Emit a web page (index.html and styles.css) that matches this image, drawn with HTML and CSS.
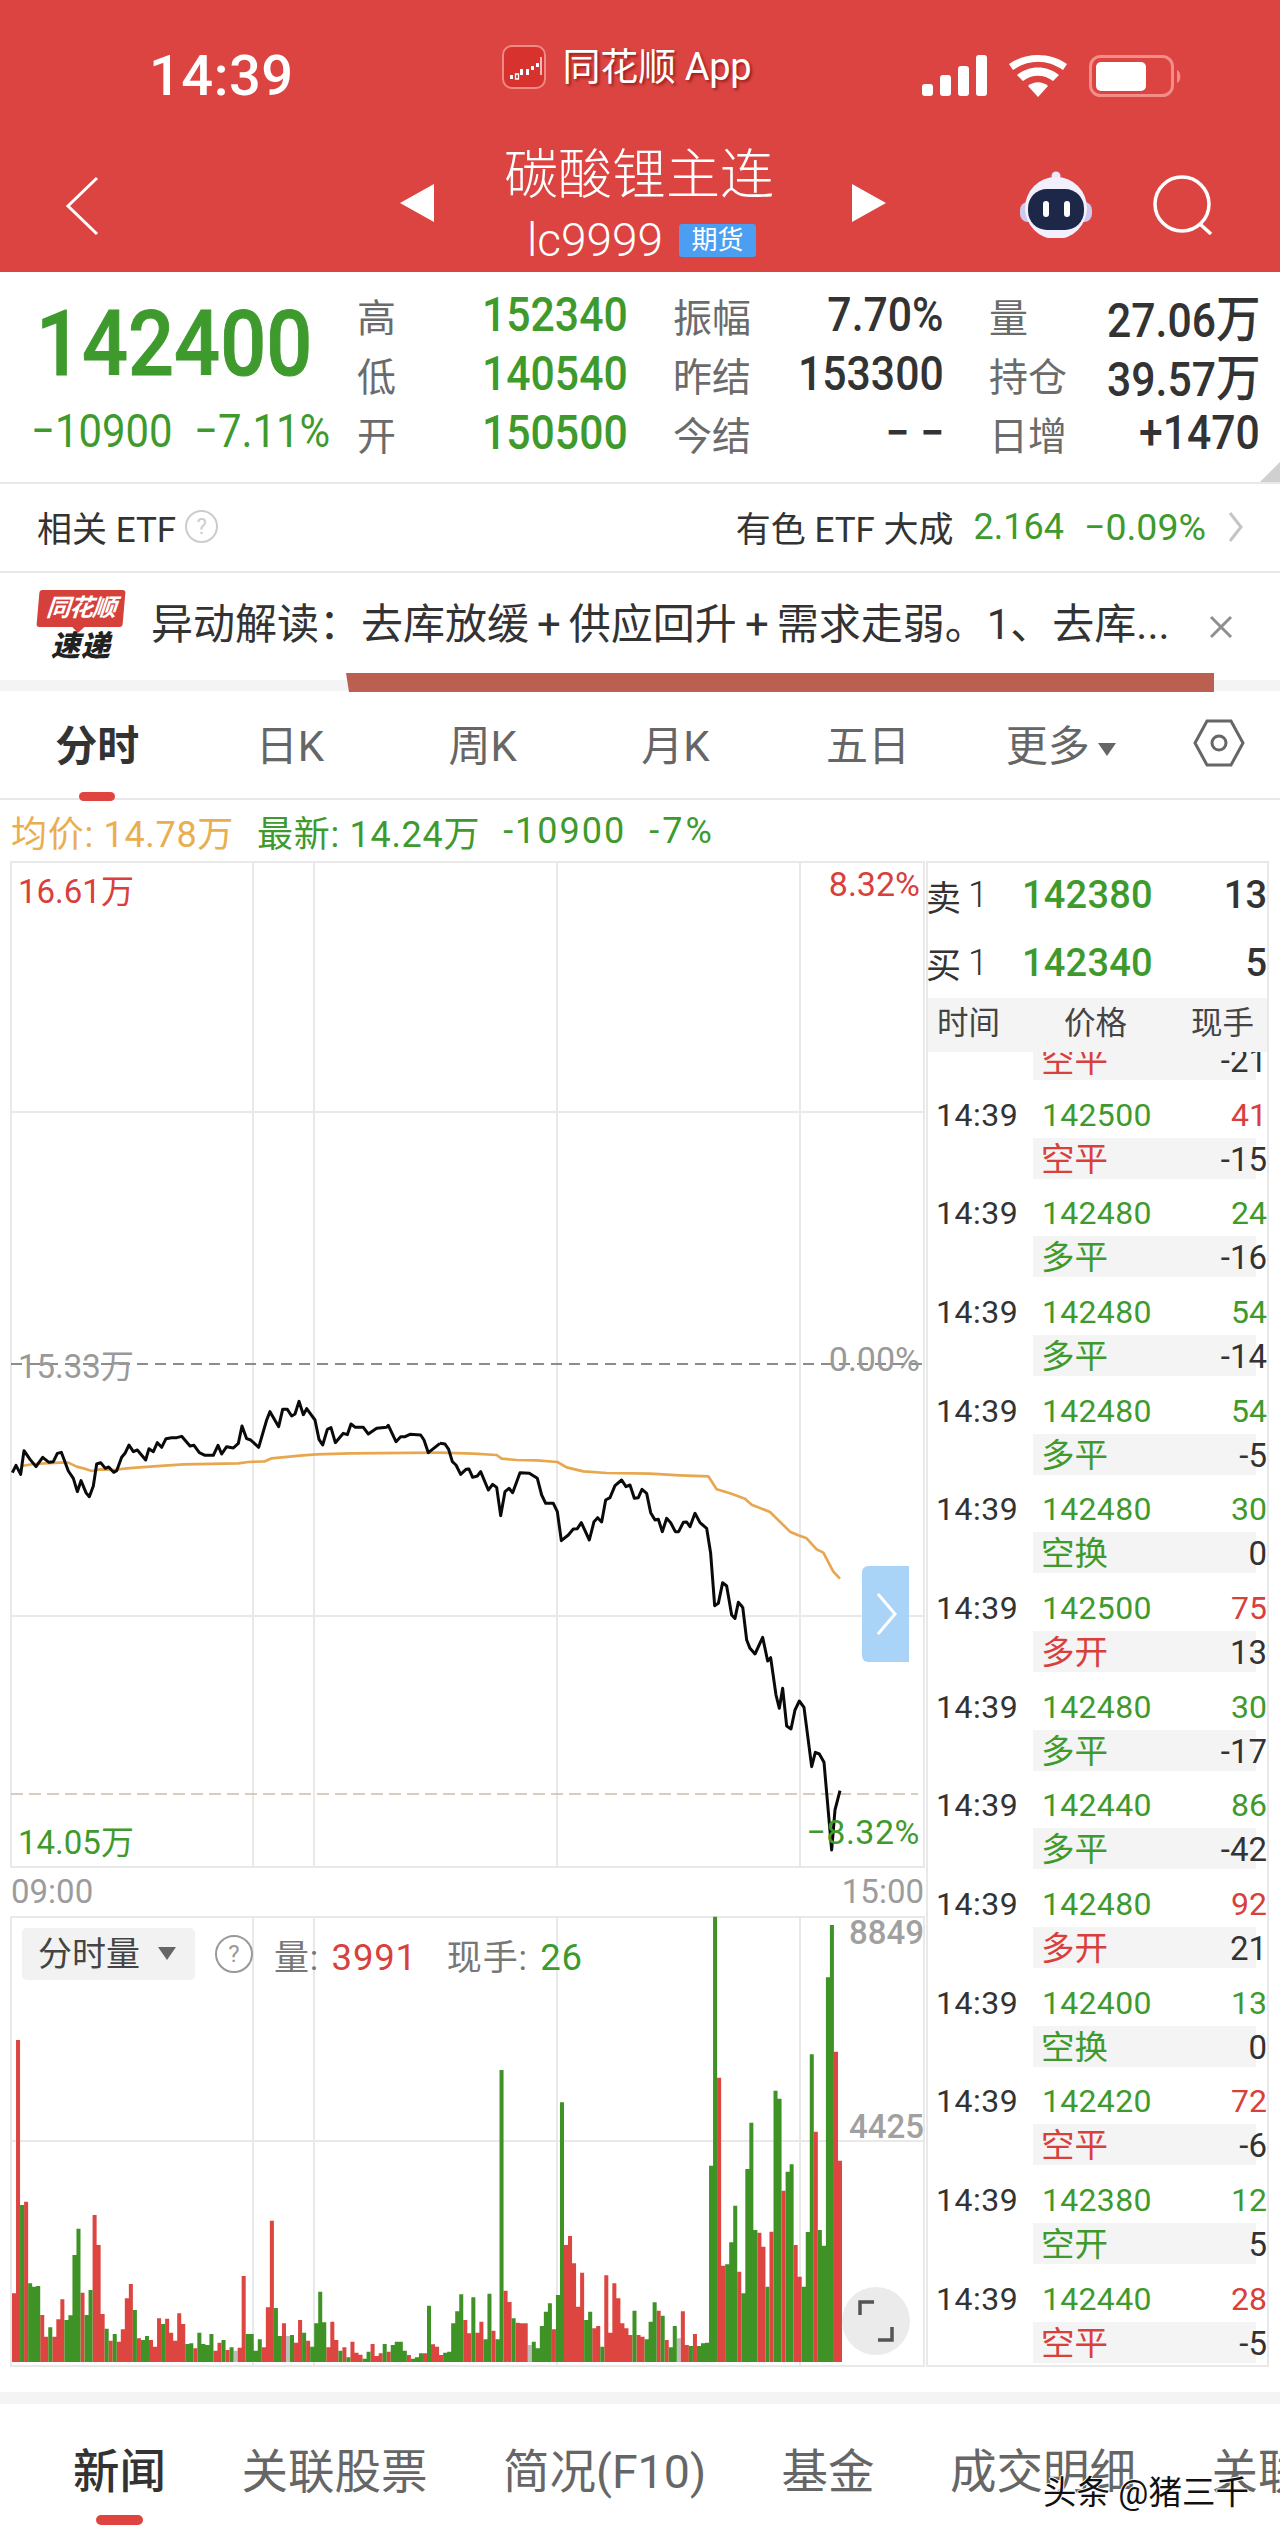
FILE: index.html
```html
<!DOCTYPE html>
<html lang="zh-CN">
<head>
<meta charset="utf-8">
<title>碳酸锂主连</title>
<link rel="stylesheet" href="styles.css">
</head>
<body>
<div class="page">
  <header class="head">
    <div class="status">
      <span class="clock">14:39</span>
      <span class="source">
        <svg class="app-icon" viewBox="0 0 44 44"><rect x="1" y="1" width="42" height="42" rx="9" fill="#d8322f" stroke="#f08a85" stroke-width="2"/><path d="M8 30h3v4H8zM18 24h3v6h-3zM24 24h3v6h-3zM29 21h3v4h-3zM34 18h3v4h-3z" fill="#fff"/><path d="M13.500 29h3v5h-3zM39 12v18" fill="none" stroke="#fff" stroke-width="1.300"/></svg>
        <span class="source-name">同花顺 App</span>
      </span>
      <span class="sys-icons">
        <svg class="signal" viewBox="0 0 65 41"><rect x="0" y="29" width="11" height="12" rx="3"/><rect x="18" y="20" width="11" height="21" rx="3"/><rect x="36" y="11" width="11" height="30" rx="3"/><rect x="54" y="0" width="11" height="41" rx="3"/></svg>
        <svg class="wifi" viewBox="0 0 58 42"><path d="M29 42l-10-11c6-5 14-5 20 0z"/><path d="M14 26l-6-6c12-10 30-10 42 0l-6 6c-9-7-21-7-30 0z"/><path d="M4 15l-4-6c17-12 41-12 58 0l-4 6C38 4 20 4 4 15z"/></svg>
        <svg class="battery" viewBox="0 0 94 42"><rect x="1.500" y="1.500" width="82" height="39" rx="10" fill="none" stroke="#f28d89" stroke-width="3"/><rect x="7" y="7" width="50" height="29" rx="5" fill="#fff"/><path d="M88 15c4 1 5 11 0 13z" fill="#f28d89"/></svg>
      </span>
    </div>
    <nav class="nav">
      <svg class="back" viewBox="0 0 34 60"><path d="M32 2L3 30l29 28" fill="none" stroke="#fff" stroke-width="3"/></svg>
      <span class="arrow arrow-left"></span>
      <div class="instrument">
        <div class="inst-name">碳酸锂主连</div>
        <div class="inst-code"><span>lc9999</span><span class="badge">期货</span></div>
      </div>
      <span class="arrow arrow-right"></span>
      <svg class="robot" viewBox="0 0 72 68"><circle cx="36" cy="6" r="4.500" fill="#eee9fb"/><path d="M36 8v8" stroke="#eee9fb" stroke-width="2.500"/><rect x="0" y="32" width="72" height="20" rx="8" fill="#cfc8ee"/><circle cx="36" cy="38" r="31" fill="#f3f0fd"/><rect x="8" y="19" width="56" height="41" rx="19" fill="#1d2748"/><rect x="23" y="31" width="6" height="16" rx="3" fill="#fff"/><rect x="44" y="31" width="6" height="16" rx="3" fill="#fff"/></svg>
      <svg class="search" viewBox="0 0 62 60"><circle cx="29" cy="29" r="27" fill="none" stroke="#fff" stroke-width="3.500"/><path d="M47 49l11 10" stroke="#fff" stroke-width="3.500"/></svg>
    </nav>
  </header>

  <section class="quote">
    <div class="last">
      <div class="last-price">142400</div>
      <div class="last-change"><span>−10900</span><span>−7.11%</span></div>
    </div>
    <div class="stat-grid">
      <div class="stat"><span class="stat-label">高</span><span class="stat-val green">152340</span></div>
      <div class="stat"><span class="stat-label">振幅</span><span class="stat-val">7.70%</span></div>
      <div class="stat"><span class="stat-label">量</span><span class="stat-val">27.06<b class="wan">万</b></span></div>
      <div class="stat"><span class="stat-label">低</span><span class="stat-val green">140540</span></div>
      <div class="stat"><span class="stat-label">昨结</span><span class="stat-val">153300</span></div>
      <div class="stat"><span class="stat-label">持仓</span><span class="stat-val">39.57<b class="wan">万</b></span></div>
      <div class="stat"><span class="stat-label">开</span><span class="stat-val green">150500</span></div>
      <div class="stat"><span class="stat-label">今结</span><span class="stat-val">− −</span></div>
      <div class="stat"><span class="stat-label">日增</span><span class="stat-val">+1470</span></div>
    </div>
    <span class="corner"></span>
  </section>

  <section class="etf">
    <div class="etf-left"><span>相关 ETF</span><span class="help">?</span></div>
    <div class="etf-right">
      <span>有色 ETF 大成</span>
      <span class="green etf-num">2.164</span>
      <span class="green etf-pct">−0.09%</span>
      <svg class="chev" viewBox="0 0 16 30"><path d="M2 1l11 14L2 29" fill="none" stroke="#c4c4c4" stroke-width="3"/></svg>
    </div>
  </section>

  <section class="news">
    <div class="news-logo">
      <span class="logo-top">同花顺</span>
      <span class="logo-bottom">速递</span>
    </div>
    <div class="news-text">异动解读：去库放缓<span class="plus">+</span>供应回升<span class="plus">+</span>需求走弱。1、去库...</div>
    <svg class="close" viewBox="0 0 24 24"><path d="M2 2l20 20M22 2L2 22" stroke="#8f8f8f" stroke-width="3"/></svg>
  </section>
  <div class="band"><span class="band-strip"></span></div>

  <nav class="tabs">
    <span class="tab active">分时</span>
    <span class="tab">日K</span>
    <span class="tab">周K</span>
    <span class="tab">月K</span>
    <span class="tab">五日</span>
    <span class="tab">更多<i class="caret"></i></span>
    <svg class="hex" viewBox="0 0 52 48"><path d="M14 2h24l12 22-12 22H14L2 24z" fill="none" stroke="#666" stroke-width="3"/><circle cx="26" cy="24" r="7" fill="none" stroke="#666" stroke-width="3"/></svg>
  </nav>

  <div class="legend">
    <span class="orange">均价: 14.78万</span>
    <span class="green">最新: 14.24万</span>
    <span class="green legend-num">-10900</span>
    <span class="green legend-pct">-7%</span>
  </div>

  <section class="market">
    <div class="charts">
      <div class="price-chart">
        <svg class="canvas" viewBox="0 861 926 1007">
          <g class="grid">
            <path d="M11 861V1868M253 861V1868M314 861V1868M557 861V1868M800 861V1868M924 861V1868M10 862H925M10 1112H925M10 1616H925M10 1867H925"/>
          </g>
          <path class="dash-grey" d="M11 1364H925"/>
          <path class="dash-tan" d="M11 1794H918"/>
          <g transform="translate(0 1340) scale(.33333)">
            <polyline class="avg" points="65,378 100,372 180,368 205,368 230,380 250,385 275,393 300,388 340,390 380,385 450,380 550,373 715,370 745,366 795,364 815,355 900,347 950,343 1050,340 1320,338"/>
            <polyline class="avg" transform="translate(1320 0)" points="0,338 100,341 170,345 185,356 230,360 290,361 352,366 380,382 430,394 500,399 630,401 720,406 805,409 830,448 870,460 915,476 935,494 990,516 1050,575 1075,586 1100,595 1130,628 1150,638 1180,695 1200,716"/>
            <polyline class="px" points="37,398 48,376 62,403 72,332 90,358 108,380 128,352 147,367 160,365 172,340 184,337 205,393 220,415 232,455 243,422 258,458 268,470 280,438 290,372 302,368 316,385 326,381 341,397 350,392 365,352 375,340 387,315 400,335 412,330 437,360 447,326 460,335 472,308 485,322 498,296 515,293 530,293 545,289 570,318 582,316 598,338 615,346 640,346 654,316 665,342 680,320 700,324 715,310 726,258 740,296 752,300 776,322 800,240 810,215 836,260 848,208 862,208 875,228 885,222 897,184 910,224 920,206 945,240 957,298 968,315 982,268 993,263 1006,308 1030,280 1042,284 1053,252 1066,262 1090,262 1105,282 1130,265 1160,262 1165,256 1188,305 1202,290 1215,290 1230,283 1262,285 1272,300 1285,338 1320,310"/>
            <polyline class="px" transform="translate(1320 0)" points="0,310 15,312 26,328 37,365 48,375 62,403 78,388 87,387 98,412 112,408 122,395 145,450 158,433 170,442 182,527 195,455 207,445 218,458 240,398 268,400 292,415 305,465 317,490 340,490 352,515 364,602 385,585 400,567 412,566 424,548 448,600 462,545 473,533 485,546 497,480 510,473 525,437 545,420 558,440 570,435 583,475 595,473 606,448 620,460 632,518 645,540 655,538 667,575 680,535 692,548 706,575 716,575 730,547 740,546 750,560 765,520 780,548 800,565 812,640 824,797 835,790 848,728 860,738 875,825 885,835 895,787 908,802"/>
          </g>
          <g transform="translate(700 1600) scale(.33333)">
            <polyline class="px" points="128,20 140,120 150,145 165,162 188,112 203,183 212,173 228,285 238,325 248,265 260,378 273,387 285,330 298,303 312,322 335,500 346,457 358,462 372,487 395,750 405,630 420,572"/>
          </g>
        </svg>
        <span class="axis-label al-top-l red">16.61万</span>
        <span class="axis-label al-top-r red">8.32%</span>
        <span class="axis-label al-mid-l grey">15.33万</span>
        <span class="axis-label al-mid-r grey">0.00%</span>
        <span class="axis-label al-low-l green">14.05万</span>
        <span class="axis-label al-low-r green">−8.32%</span>
        <span class="side-tab"><svg viewBox="0 0 22 46"><path d="M3 3l17 20L3 43" fill="none" stroke="#fff" stroke-width="3"/></svg></span>
      </div>
      <div class="time-axis"><span>09:00</span><span>15:00</span></div>
      <div class="vol-chart">
        <svg class="canvas" viewBox="0 1916 926 451">
          <path class="grid-line" d="M11 1916V2367M253 1916V2367M314 1916V2367M557 1916V2367M800 1916V2367M924 1916V2367M10 1917H925M10 2141H925M10 2366H925"/>
          <svg x="12" y="1880" width="830" height="482" viewBox="0 0 206 1446" preserveAspectRatio="none">
            <path class="bar-grey" d="M55.500 1412V1446M68.500 1368V1446M128.500 1395V1446M165.500 1375V1446"/>
            <path class="bar-red" d="M.5 1240V1446M1.500 480V1446M3.500 965V1446M7.500 1305V1446M8.500 1370V1446M10.500 1370V1446M11.500 1318V1446M12.500 1258V1446M17.500 1238V1446M20.500 1005V1446M21.500 1095V1446M22.500 1302V1446M24.500 1382V1446M26.500 1385V1446M27.500 1348V1446M28.500 1255V1446M29.500 1212V1446M31.500 1375V1446M34.500 1380V1446M35.500 1400V1446M36.500 1315V1446M38.500 1316V1446M39.500 1358V1446M40.500 1382V1446M41.500 1300V1446M42.500 1332V1446M45.500 1405V1446M50.500 1412V1446M51.500 1388V1446M53.500 1410V1446M56.500 1403V1446M57.500 1188V1446M62.500 1402V1446M63.500 1282V1446M64.500 1022V1446M67.500 1330V1446M70.500 1388V1446M71.500 1320V1446M73.500 1382V1446M78.500 1402V1446M79.500 1325V1446M80.500 1380V1446M82.500 1402V1446M84.500 1385V1446M85.500 1418V1446M86.500 1424V1446M89.500 1392V1446M90.500 1428V1446M91.500 1420V1446M93.500 1415V1446M98.500 1425V1446M102.500 1420V1446M104.500 1393V1446M105.500 1400V1446M106.500 1425V1446M112.500 1320V1446M113.500 1360V1446M115.500 1358V1446M116.500 1325V1446M119.500 1352V1446M122.500 1232V1446M123.500 1266V1446M125.500 1328V1446M126.500 1330V1446M127.500 1330V1446M134.500 1348V1446M137.500 1095V1446M138.500 1068V1446M139.500 1150V1446M140.500 1280V1446M141.500 1178V1446M144.500 1345V1446M145.500 1338V1446M147.500 1186V1446M148.500 1358V1446M149.500 1210V1446M150.500 1255V1446M151.500 1330V1446M152.500 1345V1446M153.500 1365V1446M155.500 1365V1446M156.500 1370V1446M160.500 1292V1446M162.500 1380V1446M166.500 1294V1446M167.500 1395V1446M169.500 1362V1446M175.500 593V1446M176.500 1157V1446M180.500 1175V1446M185.500 1058V1446M186.500 1100V1446M188.500 1055V1446M191.500 932V1446M194.500 1095V1446M195.500 1190V1446M199.500 755V1446M204.500 515V1446M205.500 842V1446"/>
            <path class="bar-green" d="M2.500 975V1446M4.500 1210V1446M5.500 1220V1446M6.500 1218V1446M9.500 1342V1446M13.500 1320V1446M14.500 1306V1446M15.500 1125V1446M16.500 1046V1446M18.500 1305V1446M19.500 1230V1446M23.500 1346V1446M25.500 1362V1446M30.500 1290V1446M32.500 1380V1446M33.500 1368V1446M37.500 1332V1446M43.500 1392V1446M44.500 1390V1446M46.500 1358V1446M47.500 1392V1446M48.500 1395V1446M49.500 1362V1446M52.500 1380V1446M54.500 1402V1446M58.500 1362V1446M59.500 1362V1446M60.500 1412V1446M61.500 1378V1446M65.500 1284V1446M66.500 1368V1446M69.500 1365V1446M72.500 1358V1446M74.500 1400V1446M75.500 1330V1446M76.500 1235V1446M77.500 1327V1446M81.500 1412V1446M83.500 1432V1446M87.500 1436V1446M88.500 1415V1446M92.500 1392V1446M94.500 1395V1446M95.500 1385V1446M96.500 1385V1446M97.500 1412V1446M99.500 1436V1446M100.500 1432V1446M101.500 1420V1446M103.500 1277V1446M107.500 1418V1446M108.500 1415V1446M109.500 1330V1446M110.500 1294V1446M111.500 1243V1446M114.500 1252V1446M117.500 1378V1446M118.500 1241V1446M120.500 1378V1446M121.500 570V1446M124.500 1315V1446M129.500 1385V1446M130.500 1405V1446M131.500 1338V1446M132.500 1295V1446M133.500 1270V1446M135.500 1245V1446M136.500 667V1446M142.500 1320V1446M143.500 1295V1446M146.500 1400V1446M154.500 1292V1446M157.500 1378V1446M158.500 1325V1446M159.500 1267V1446M161.500 1307V1446M163.500 1402V1446M164.500 1338V1446M168.500 1398V1446M170.500 1398V1446M171.500 1390V1446M172.500 1388V1446M173.500 857V1446M174.500 110V1446M177.500 1153V1446M178.500 1087V1446M179.500 977V1446M181.500 1240V1446M182.500 867V1446M183.500 728V1446M184.500 1050V1446M187.500 1220V1446M189.500 632V1446M190.500 656V1446M192.500 875V1446M193.500 853V1446M196.500 1220V1446M197.500 1056V1446M198.500 523V1446M200.500 1050V1446M201.500 1097V1446M202.500 292V1446M203.500 135V1446"/>
          </svg>
        </svg>
        <div class="vol-head">
          <span class="vol-pill">分时量<i class="caret caret-pill"></i></span>
          <span class="vol-help">?</span>
          <span class="vol-info">量: <em class="red">3991</em></span>
          <span class="vol-info">现手: <em class="green">26</em></span>
        </div>
        <span class="vol-label vl-top">8849</span>
        <span class="vol-label vl-mid">4425</span>
        <span class="full-btn"><svg viewBox="0 0 36 42"><path d="M2 15V2h14M34 27v13H20" fill="none" stroke="#555" stroke-width="3.500"/></svg></span>
      </div>
    </div>

    <aside class="book">
      <div class="book-row"><span class="bk-label">卖</span><span class="bk-no">1</span><span class="bk-price">142380</span><span class="bk-qty">13</span></div>
      <div class="book-row"><span class="bk-label">买</span><span class="bk-no">1</span><span class="bk-price">142340</span><span class="bk-qty">5</span></div>
      <div class="book-head"><span>时间</span><span>价格</span><span>现手</span></div>
      <div class="ticks">
        <div class="tick"><div class="tick-top"></div><div class="tick-bot"><span class="t-type red">空平</span><span class="t-oi">-21</span></div></div>
        <div class="tick"><div class="tick-top"><span class="t-time">14:39</span><span class="t-price">142500</span><span class="t-vol red">41</span></div><div class="tick-bot"><span class="t-type red">空平</span><span class="t-oi">-15</span></div></div>
        <div class="tick"><div class="tick-top"><span class="t-time">14:39</span><span class="t-price">142480</span><span class="t-vol green">24</span></div><div class="tick-bot"><span class="t-type green">多平</span><span class="t-oi">-16</span></div></div>
        <div class="tick"><div class="tick-top"><span class="t-time">14:39</span><span class="t-price">142480</span><span class="t-vol green">54</span></div><div class="tick-bot"><span class="t-type green">多平</span><span class="t-oi">-14</span></div></div>
        <div class="tick"><div class="tick-top"><span class="t-time">14:39</span><span class="t-price">142480</span><span class="t-vol green">54</span></div><div class="tick-bot"><span class="t-type green">多平</span><span class="t-oi">-5</span></div></div>
        <div class="tick"><div class="tick-top"><span class="t-time">14:39</span><span class="t-price">142480</span><span class="t-vol green">30</span></div><div class="tick-bot"><span class="t-type green">空换</span><span class="t-oi">0</span></div></div>
        <div class="tick"><div class="tick-top"><span class="t-time">14:39</span><span class="t-price">142500</span><span class="t-vol red">75</span></div><div class="tick-bot"><span class="t-type red">多开</span><span class="t-oi">13</span></div></div>
        <div class="tick"><div class="tick-top"><span class="t-time">14:39</span><span class="t-price">142480</span><span class="t-vol green">30</span></div><div class="tick-bot"><span class="t-type green">多平</span><span class="t-oi">-17</span></div></div>
        <div class="tick"><div class="tick-top"><span class="t-time">14:39</span><span class="t-price">142440</span><span class="t-vol green">86</span></div><div class="tick-bot"><span class="t-type green">多平</span><span class="t-oi">-42</span></div></div>
        <div class="tick"><div class="tick-top"><span class="t-time">14:39</span><span class="t-price">142480</span><span class="t-vol red">92</span></div><div class="tick-bot"><span class="t-type red">多开</span><span class="t-oi">21</span></div></div>
        <div class="tick"><div class="tick-top"><span class="t-time">14:39</span><span class="t-price">142400</span><span class="t-vol green">13</span></div><div class="tick-bot"><span class="t-type green">空换</span><span class="t-oi">0</span></div></div>
        <div class="tick"><div class="tick-top"><span class="t-time">14:39</span><span class="t-price">142420</span><span class="t-vol red">72</span></div><div class="tick-bot"><span class="t-type red">空平</span><span class="t-oi">-6</span></div></div>
        <div class="tick"><div class="tick-top"><span class="t-time">14:39</span><span class="t-price">142380</span><span class="t-vol green">12</span></div><div class="tick-bot"><span class="t-type green">空开</span><span class="t-oi">5</span></div></div>
        <div class="tick"><div class="tick-top"><span class="t-time">14:39</span><span class="t-price">142440</span><span class="t-vol red">28</span></div><div class="tick-bot"><span class="t-type red">空平</span><span class="t-oi">-5</span></div></div>
      </div>
    </aside>
  </section>

  <div class="band-bottom"></div>

  <nav class="bottom-tabs">
    <span class="btab active">新闻</span>
    <span class="btab">关联股票</span>
    <span class="btab">简况(F10)</span>
    <span class="btab">基金</span>
    <span class="btab">成交明细</span>
    <span class="btab">关联期货</span>
  </nav>
  <span class="watermark">头条 @猪三千</span>
</div>
</body>
</html>
```

FILE: styles.css
```css
* { box-sizing: border-box; }
html, body { margin: 0; padding: 0; background: #fff; }
body { font-family: Roboto, "Noto Sans CJK SC", sans-serif; color: #333; }
.page { position: relative; width: 1280px; height: 2536px; overflow: hidden; background: #fff; }
i, em { font-style: normal; }
.green { color: #3f9a2e; }
.red { color: #d8403c; }
.grey { color: #999; }
.orange { color: #e9ae50; }

/* header */
.head { height: 272px; background: #dc4441; color: #fff; display: flex; flex-direction: column; }
.status { height: 128px; position: relative; display: flex; align-items: flex-start; padding: 44px 0 0 149px; }
.clock { font-family: Roboto, sans-serif; font-weight: 500; font-size: 56px; line-height: 64px; letter-spacing: .5px; }
.source { display: flex; align-items: center; gap: 17px; margin: 1px 0 0 208px; height: 44px; }
.app-icon { width: 44px; height: 44px; }
.source-name { font-size: 38px; font-weight: 400; line-height: 44px; white-space: nowrap; text-shadow: 2px 2px 3px rgba(90,0,0,.55); letter-spacing: -.3px; }
.sys-icons { display: flex; align-items: flex-start; margin: 11px 0 0 171px; }
.signal { width: 65px; height: 41px; fill: #fff; }
.wifi { width: 58px; height: 42px; fill: #fff; margin-left: 22px; }
.battery { width: 94px; height: 42px; margin-left: 22px; }

.nav { flex: 1; display: flex; align-items: flex-start; padding-left: 65px; }
.back { width: 34px; height: 60px; margin-top: 48px; }
.arrow { width: 0; height: 0; border-top: 19px solid transparent; border-bottom: 19px solid transparent; margin-top: 56px; }
.arrow-left { border-right: 34px solid #fff; margin-left: 301px; }
.arrow-right { border-left: 34px solid #fff; }
.instrument { width: 418px; display: flex; flex-direction: column; align-items: center; }
.inst-name { font-size: 54px; line-height: 68px; font-weight: 300; margin: 14px 8px 0 0; }
.inst-code { display: flex; align-items: center; gap: 16px; height: 46px; font-size: 46px; font-weight: 300; line-height: 46px; margin: 7px 3px 0 0; }
.badge { width: 77px; height: 33px; border-radius: 3px; background: #4b9ef2; font-size: 26px; line-height: 33px; text-align: center; font-weight: 400; }
.robot { width: 72px; height: 68px; margin: 42px 0 0 134px; }
.search { width: 62px; height: 60px; margin: 47px 0 0 61px; }

/* quote */
.quote { position: relative; height: 210px; display: flex; }
.last { width: 357px; padding: 28px 0 0 33px; }
.last-price { font-weight: 500; font-size: 91px; line-height: 88px; color: #3f9a2e; margin-left: 3px; transform: scaleX(.89); transform-origin: left center; -webkit-text-stroke: 1px #3f9a2e; }
.last-change { display: flex; font-size: 47px; line-height: 48px; color: #3f9a2e; margin: 19px 0 0 -2px; white-space: nowrap; }
.last-change span { display: block; width: 167px; transform: scaleX(.89); transform-origin: left center; }
.stat-grid { display: grid; grid-template-columns: repeat(3, 271px); grid-auto-rows: 59px; column-gap: 45px; padding-top: 13px; }
.stat { display: flex; justify-content: space-between; align-items: center; white-space: nowrap; }
.stat-label { font-size: 39px; color: #6b6b6b; font-weight: 400; }
.stat-val { font-size: 48px; color: #333; font-weight: 500; transform: scaleX(.89); transform-origin: right center; }
.stat-val.green { color: #3f9a2e; }
.wan { font-family: "Noto Sans CJK SC", sans-serif; font-size: 50px; font-weight: 500; }
.corner { position: absolute; right: 0; bottom: 0; width: 0; height: 0; border-left: 20px solid transparent; border-bottom: 20px solid #d0d0d0; }

/* etf */
.etf { height: 91px; border-top: 2px solid #e8e8e8; border-bottom: 2px solid #e8e8e8; display: flex; justify-content: space-between; align-items: center; padding: 0 36px 2px 37px; font-size: 35px; }
.etf-left { display: flex; align-items: center; gap: 9px; }
.help { width: 33px; height: 33px; border: 2px solid #ccc; border-radius: 50%; color: #ccc; font-size: 22px; line-height: 29px; text-align: center; }
.etf-right { display: flex; align-items: center; gap: 20px; white-space: nowrap; }
.etf-num { font-size: 36px; }
.etf-pct { font-size: 37.500px; }
.chev { width: 16px; height: 30px; margin-left: 2px; }

/* news */
.news { height: 107px; display: flex; align-items: flex-start; padding-left: 37px; position: relative; }
.news-logo { width: 88px; margin-top: 17px; display: flex; flex-direction: column; align-items: center; }
.logo-top { position: relative; width: 86px; height: 37px; background: #d6403a; color: #fff; font-size: 24px; font-weight: 700; font-style: italic; line-height: 37px; text-align: center; border-radius: 3px; transform: skewX(-5deg); white-space: nowrap; letter-spacing: -1px; }
.logo-top::after { content: ""; position: absolute; left: 36px; top: 37px; width: 0; height: 0; border-left: 6px solid transparent; border-right: 6px solid transparent; border-top: 6px solid #d6403a; }
.logo-bottom { font-size: 29px; font-weight: 900; font-style: italic; line-height: 32px; margin-top: 3px; color: #222; letter-spacing: 1px; }
.news-text { margin: 30px 0 0 26px; font-size: 42px; line-height: 44px; white-space: nowrap; color: #333; }
.plus { padding: 0 8px; font-size: 42px; }
.close { width: 24px; height: 24px; position: absolute; left: 1209px; top: 42px; }
.band { position: relative; height: 11px; background: #f4f4f4; }
.band-strip { position: absolute; left: 346px; top: -7px; width: 868px; height: 19px; background: #bb6050; clip-path: polygon(0 0, 100% 0, 100% 100%, 3px 100%); }

/* tabs */
.tabs { height: 109px; border-bottom: 2px solid #e8e8e8; display: flex; align-items: center; padding: 0 0 4px 1px; position: relative; }
.tab { width: 192.700px; text-align: center; font-size: 42px; font-weight: 400; color: #666; white-space: nowrap; position: relative; }
.tab.active { color: #333; font-weight: 700; }
.tab.active::after { content: ""; position: absolute; left: 78px; bottom: -28px; width: 36px; height: 9px; background: #df4440; border-radius: 5px; }
.caret { display: inline-block; width: 0; height: 0; border-left: 9px solid transparent; border-right: 9px solid transparent; border-top: 13px solid #666; margin-left: 8px; vertical-align: 5px; }
.hex { width: 52px; height: 48px; margin-left: 36px; }

.legend { height: 61px; display: flex; align-items: center; gap: 23px; padding: 0 0 0 11px; font-size: 36px; letter-spacing: .7px; white-space: nowrap; }
.legend-num { letter-spacing: 2px; }
.legend-pct { letter-spacing: 3px; }

/* market */
.market { display: flex; align-items: flex-start; }
.charts { width: 926px; }
.canvas { position: absolute; left: 0; top: 0; width: 926px; height: 100%; display: block; }
.price-chart { position: relative; height: 1007px; }
.grid path, .grid-line { fill: none; stroke: #e9e9e9; stroke-width: 2; }
.dash-grey { fill: none; stroke: #8c8c8c; stroke-width: 2; stroke-dasharray: 11 7; }
.dash-tan { fill: none; stroke: #cdbfa8; stroke-width: 1.500; stroke-dasharray: 12 6; }
.avg { fill: none; stroke: #e8a74e; stroke-width: 8; stroke-linejoin: round; }
.px { fill: none; stroke: #0a0a0a; stroke-width: 9; stroke-linejoin: round; }
.bar-red { fill: none; stroke: #dd4540; stroke-width: 1; }
.bar-green { fill: none; stroke: #3f9326; stroke-width: 1; }
.bar-grey { fill: none; stroke: #bdbdbd; stroke-width: 1; }
.axis-label { position: absolute; font-size: 33px; line-height: 38px; white-space: nowrap; }
.al-top-l { left: 18px; top: 12px; }
.al-top-r { right: 6px; top: 4px; font-size: 34px; }
.al-mid-l { left: 18px; top: 487px; }
.al-mid-r { right: 6px; top: 479px; font-size: 34px; }
.al-low-l { left: 18px; top: 963px; }
.al-low-r { right: 6px; top: 952px; font-size: 34px; letter-spacing: .5px; }
.side-tab { position: absolute; left: 862px; top: 705px; width: 47px; height: 96px; background: #a9d4f7; border-radius: 6px 0 0 6px; display: flex; align-items: center; justify-content: center; }
.side-tab svg { width: 22px; height: 46px; }
.time-axis { height: 48px; display: flex; justify-content: space-between; align-items: center; padding: 0 2px 2px 11px; color: #9c9c9c; font-size: 33px; }
.vol-chart { position: relative; height: 451px; }
.vol-head { position: absolute; left: 22px; top: 12px; display: flex; align-items: center; white-space: nowrap; }
.vol-pill { width: 173px; height: 52px; background: #f2f2f2; border-radius: 5px; font-size: 34px; line-height: 52px; padding-left: 16px; color: #444; }
.caret-pill { margin-left: 18px; vertical-align: 6px; }
.vol-help { width: 38px; height: 38px; margin-left: 20px; border: 2px solid #999; border-radius: 50%; color: #999; font-size: 24px; line-height: 34px; text-align: center; }
.vol-info { margin-left: 21px; font-size: 35px; letter-spacing: .8px; color: #777; }
.vol-info em { font-size: 36.500px; margin-left: 3px; }
.vol-info + .vol-info { margin-left: 30px; }
.vol-label { position: absolute; right: 2px; color: #a0a0a0; font-size: 33px; line-height: 38px; font-weight: 500; }
.vl-top { top: -2px; }
.vl-mid { top: 192px; }
.full-btn { position: absolute; left: 842px; top: 371px; width: 68px; height: 68px; background: #ebebeb; border-radius: 50%; display: flex; align-items: center; justify-content: center; }
.full-btn svg { width: 36px; height: 42px; }

/* order book */
.book { width: 343px; height: 1506px; border: 2px solid #e9e9e9; }
.book-row { height: 70.500px; display: flex; align-items: center; margin-left: -2px; white-space: nowrap; }
.book-row:first-child { height: 64.500px; }
.bk-label { font-size: 35px; color: #333; width: 42px; }
.bk-no { font-size: 36px; color: #333; width: 54px; font-weight: 300; }
.bk-price { font-size: 38px; font-weight: 500; color: #3f9a2e; letter-spacing: .2px; }
.bk-qty { margin-left: auto; font-size: 38px; font-weight: 500; color: #333; }
.book-head { height: 54px; background: #f4f4f4; display: flex; justify-content: space-between; align-items: center; padding: 0 13px 2px 9px; font-size: 31.500px; line-height: 40px; color: #444; }
.ticks { height: 1315px; overflow: hidden; }
.tick { height: 98.670px; }
.tick:first-child { margin-top: -59px; }
.tick-top { height: 46px; display: flex; align-items: center; padding-left: 8px; }
.t-time { width: 106px; font-size: 32px; letter-spacing: .5px; color: #333; }
.t-price { font-size: 32px; color: #3f9a2e; letter-spacing: .3px; }
.t-vol { margin-left: auto; font-size: 32px; }
.tick-bot { height: 41px; margin: 0 11px 0 105px; background: #f4f4f4; display: flex; align-items: center; justify-content: space-between; padding: 2px 0 0 8px; }
.t-type { font-size: 33.500px; line-height: 39px; }
.t-oi { font-size: 33px; color: #333; position: relative; left: 11px; }

/* bottom */
.band-bottom { height: 12px; margin-top: 25px; background: #f4f4f4; }
.bottom-tabs { height: 126px; display: flex; gap: 75.500px; align-items: center; padding: 0 0 0 73px; white-space: nowrap; }
.btab { font-size: 46.500px; color: #666; position: relative; }
.btab.active { color: #333; font-weight: 500; }
.btab.active::after { content: ""; position: absolute; left: 23px; bottom: -24px; width: 47px; height: 10px; background: #df4440; border-radius: 5px; }
.watermark { position: absolute; left: 1043px; top: 2473px; font-size: 33.500px; line-height: 40px; color: #111; text-shadow: 1px 0 #fff, -1px 0 #fff, 0 1px #fff, 0 -1px #fff; white-space: nowrap; }
```
